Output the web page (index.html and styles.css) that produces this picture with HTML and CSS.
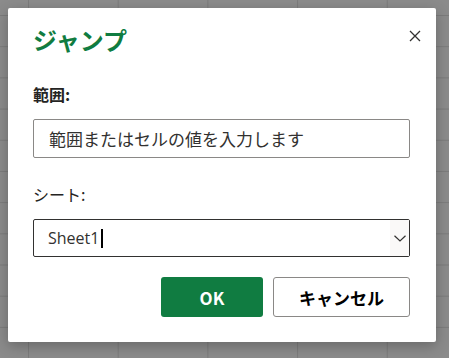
FILE: index.html
```html
<!DOCTYPE html>
<html lang="ja">
<head>
    <meta charset="UTF-8">
    <meta name="viewport" content="width=device-width, initial-scale=1.0">
    <title>ジャンプ</title>
    <link rel="stylesheet" href="styles.css">
</head>
<body>
    <div class="dialog">
        <!-- Header -->
        <div class="dialog-header">
            <h1 class="dialog-title">ジャンプ</h1>
            <button class="close-btn" aria-label="閉じる">
                <svg width="12" height="12" viewBox="0 0 12 12">
                    <path d="M1 1 L11 11 M11 1 L1 11" stroke="#323130" stroke-width="1.3" fill="none"/>
                </svg>
            </button>
        </div>

        <!-- Range -->
        <label class="field-label bold" for="range">範囲:</label>
        <input type="text" id="range" class="text-input" placeholder="範囲またはセルの値を入力します">

        <!-- Sheet -->
        <label class="field-label">シート:</label>
        <div class="select-box">
            <span class="select-value">Sheet1<span class="caret"></span></span>
            <span class="select-arrow">
                <svg width="12" height="7" viewBox="0 0 12 7">
                    <path d="M0.5 0.8 L6 6 L11.5 0.8" stroke="#323130" stroke-width="1.2" fill="none"/>
                </svg>
            </span>
        </div>

        <!-- Actions -->
        <div class="actions">
            <button class="btn btn-primary">OK</button>
            <button class="btn btn-default">キャンセル</button>
        </div>
    </div>
</body>
</html>
```

FILE: styles.css
```css
body {
    margin: 0;
    padding: 8px;
    height: 358px;
    box-sizing: border-box;
    font-family: "Noto Sans CJK JP", "Noto Sans", sans-serif;
    color: #323130;
    background-color: #8b8b8b;
    background-image:
        linear-gradient(to right, #7b7b7b 1px, transparent 1px),
        linear-gradient(to bottom, #7b7b7b 1px, transparent 1px);
    background-size: 89.7px 31.2px;
    background-position: 28px 15px;
}
.dialog {
    width: 428px;
    height: 334px;
    box-sizing: border-box;
    padding: 14px 26px 24px 25px;
    background-color: white;
    border-radius: 2px;
    box-shadow: 0 4px 14px rgba(0,0,0,0.25);
    display: flex;
    flex-direction: column;
}
.dialog-header {
    display: flex;
    justify-content: space-between;
    align-items: flex-start;
}
.dialog-title {
    margin: 0;
    font-size: 24px;
    line-height: 36px;
    font-weight: bold;
    color: #107c41;
}
.close-btn {
    margin: 6px -13px 0 0;
    padding: 2px;
    border: none;
    background: none;
    display: flex;
    cursor: pointer;
}
.field-label {
    margin-top: 26px;
    font-size: 16px;
    line-height: 20px;
    color: #252423;
}
.bold {
    font-weight: bold;
}
.text-input {
    margin-top: 15px;
    height: 39px;
    box-sizing: border-box;
    padding: 0 15px;
    border: 1px solid #8a8886;
    border-radius: 2px;
    font-family: inherit;
    font-size: 17px;
}
.text-input::placeholder {
    color: #323130;
    opacity: 1;
}
.select-box {
    margin-top: 15px;
    height: 38px;
    box-sizing: border-box;
    border: 1px solid #323130;
    border-radius: 2px;
    display: flex;
    align-items: center;
    justify-content: space-between;
}
.select-value {
    padding-left: 14px;
    font-family: "Open Sans", "Noto Sans", sans-serif;
    font-size: 16px;
    color: #323130;
    display: flex;
    align-items: center;
}
.caret {
    display: inline-block;
    width: 2px;
    height: 19px;
    margin-left: 2px;
    background-color: #000;
}
.select-arrow {
    width: 19px;
    align-self: stretch;
    background-color: #faf9f8;
    display: flex;
    align-items: center;
    justify-content: center;
}
.actions {
    margin-top: 20px;
    display: flex;
    justify-content: flex-end;
    gap: 10px;
}
.btn {
    height: 40px;
    border-radius: 3px;
    font-family: inherit;
    font-size: 17px;
    font-weight: bold;
    cursor: pointer;
}
.btn-primary {
    width: 102px;
    background-color: #107c41;
    border: none;
    color: white;
}
.btn-default {
    width: 137px;
    background-color: white;
    border: 1px solid #8a8886;
    color: #000;
}
```
